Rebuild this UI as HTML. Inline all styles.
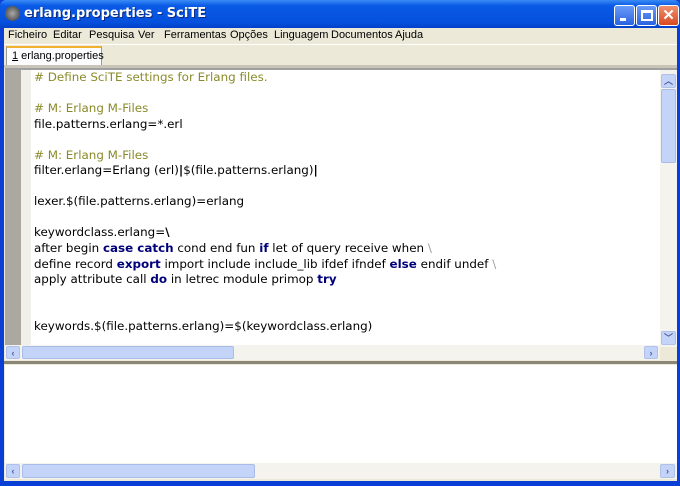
<!DOCTYPE html>
<html><head><style>
*{margin:0;padding:0;box-sizing:border-box}
body{width:680px;height:486px;overflow:hidden;background:#0a3fd6;position:relative;font-family:"Liberation Sans",sans-serif}
.abs{position:absolute}
#title{left:0;top:0;width:680px;height:28px;background:linear-gradient(#3a8cf5,#0a5ae6 20%,#0550dc 80%,#0340c8);border-radius:6px 6px 0 0}
#title .t{left:24px;top:6px;color:#fff;font-weight:bold;font-size:13px;font-family:"DejaVu Sans",sans-serif;text-shadow:1px 1px #0a2a80}
.btn{top:5px;width:21px;height:21px;border:1px solid #fff;border-radius:3px;background:linear-gradient(#6a9cf8,#2a62e0)}
#client{left:4px;top:28px;width:673px;height:453px;background:#ece9d8}
#menu{left:0;top:0;height:16px;font-size:11px;color:#000;white-space:nowrap}
#menu span{position:absolute;top:1px;font-size:11px}
#tab{left:2px;top:18px;width:96px;height:20px;background:#fcfcfe;border:1px solid #9a9a9a;border-bottom:none;border-top:2px solid #f0b030;font-size:11px;padding:2px 0 0 5px;white-space:nowrap}
#edit{left:1px;top:40px;width:672px;height:277px;background:#fff;border-top:2px solid #a0a0a0}
#gut{left:0;top:0;width:16px;height:277px;background:#aaa8a0}
#gut2{left:16px;top:0;width:10px;height:277px;background:#f0efea}
pre{position:absolute;left:29px;top:0px;font-family:"DejaVu Sans",sans-serif;font-size:11.9px;line-height:15.55px;color:#000}
.c{color:#8a8a2a}.k{color:#00007a;font-weight:bold}.g{color:#a0a0a0}
.vs{background:#f4f3ee}
.arr{background:#c4d4f8;border:1px solid #b0c0e8;border-radius:2px;color:#4a5aa0;font-size:9px;font-weight:bold;text-align:center;line-height:12px}
.thumb{background:#c4d4f8;border:1px solid #a8bce8;border-radius:2px}
</style></head><body>
<div id="title" class="abs">
 <div class="abs" style="left:5px;top:6px;width:15px;height:15px;border-radius:50%;background:radial-gradient(#aaa,#333)"></div>
 <div class="t abs">erlang.properties - SciTE</div>
 <div class="btn abs" style="left:614px"><div class="abs" style="left:5px;top:12px;width:6px;height:3px;background:#fff"></div></div>
 <div class="btn abs" style="left:636px"><div class="abs" style="left:4px;top:4px;width:12px;height:11px;border:2px solid #fff;border-top-width:3px"></div></div>
 <div class="btn abs" style="left:658px;background:linear-gradient(#f09070,#d84a20);color:#fff;font-weight:bold;font-size:15px;text-align:center;line-height:19px">✕</div>
</div>
<div id="client" class="abs">
 <div id="menu" class="abs">
  <span style="left:4px">Ficheiro</span><span style="left:49px">Editar</span><span style="left:85px">Pesquisa</span><span style="left:134px">Ver</span><span style="left:160px">Ferramentas</span><span style="left:226px">Opções</span><span style="left:270px">Linguagem</span><span style="left:327px">Documentos</span><span style="left:391px">Ajuda</span>
 </div>
 <div class="abs" style="left:0;top:16px;width:673px;height:1px;background:#fff"></div>
 <div id="tab" class="abs"><u>1</u> erlang.properties</div>
 <div class="abs" style="left:0;top:37px;width:673px;height:3px;background:#c8c5b8"></div>
 <div id="edit" class="abs">
  <div id="gut" class="abs"></div><div id="gut2" class="abs"></div>
<pre><span class="c"># Define SciTE settings for Erlang files.</span>

<span class="c"># M: Erlang M-Files</span>
file.patterns.erlang=*.erl

<span class="c"># M: Erlang M-Files</span>
filter.erlang=Erlang (erl)<b>|</b>$(file.patterns.erlang)<b>|</b>

lexer.$(file.patterns.erlang)=erlang

keywordclass.erlang=<b>\</b>
after begin <span class="k">case catch</span> cond end fun <span class="k">if</span> let of query receive when <span class="g">\</span>
define record <span class="k">export</span> import include include_lib ifdef ifndef <span class="k">else</span> endif undef <span class="g">\</span>
apply attribute call <span class="k">do</span> in letrec module primop <span class="k">try</span>


keywords.$(file.patterns.erlang)=$(keywordclass.erlang)</pre>
  <div class="abs vs" style="left:655px;top:0;width:17px;height:277px"></div>
  <div class="abs arr" style="left:656px;top:4px;width:15px;height:14px">︿</div>
  <div class="abs thumb" style="left:656px;top:19px;width:15px;height:74px"></div>
  <div class="abs arr" style="left:656px;top:261px;width:15px;height:14px">﹀</div>
 </div>
 <div class="abs vs" style="left:1px;top:317px;width:655px;height:15px"></div>
 <div class="abs arr" style="left:2px;top:318px;width:14px;height:13px">‹</div>
 <div class="abs thumb" style="left:18px;top:318px;width:212px;height:13px"></div>
 <div class="abs arr" style="left:640px;top:318px;width:14px;height:13px">›</div>
 <div class="abs" style="left:0;top:333px;width:673px;height:3px;background:#8a8778"></div>
 <div class="abs" style="left:1px;top:337px;width:672px;height:98px;background:#fff"></div>
 <div class="abs vs" style="left:1px;top:435px;width:672px;height:16px"></div>
 <div class="abs arr" style="left:2px;top:436px;width:14px;height:14px">‹</div>
 <div class="abs thumb" style="left:18px;top:436px;width:233px;height:14px"></div>
 <div class="abs arr" style="left:656px;top:436px;width:15px;height:14px">›</div>
</div>
</body></html>
